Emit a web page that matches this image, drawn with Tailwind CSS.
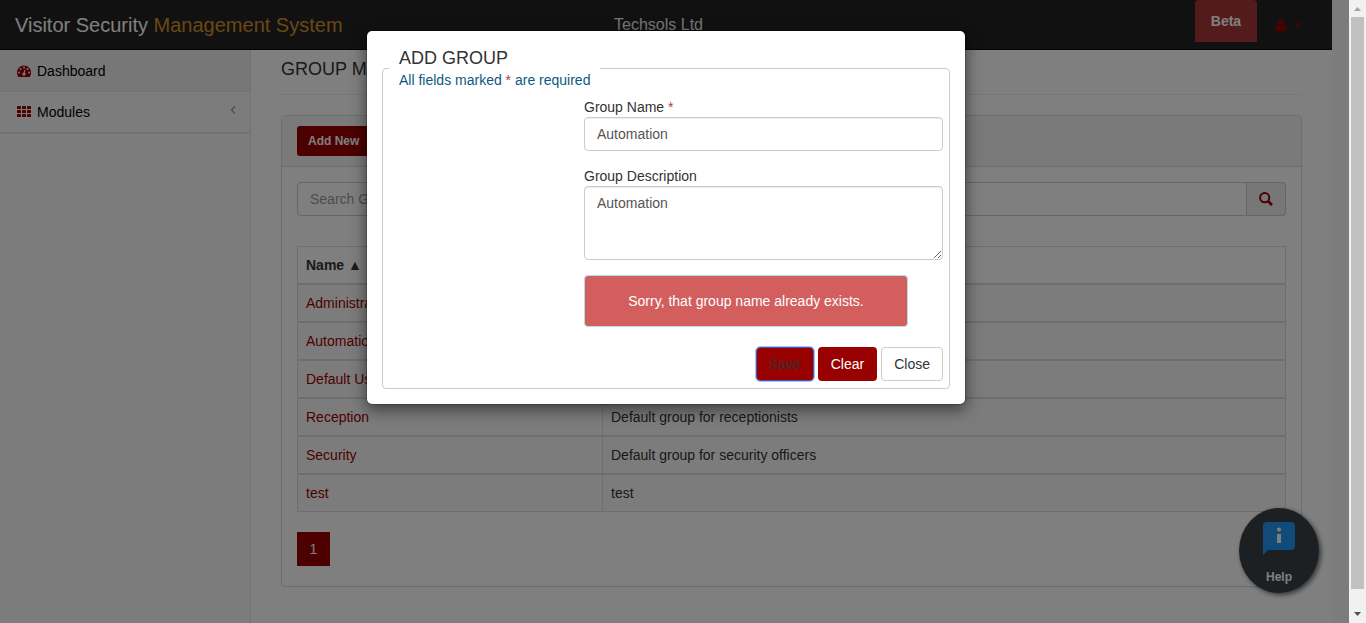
<!DOCTYPE html>
<html lang="en">
<head>
<meta charset="utf-8">
<title>Visitor Security Management System</title>
<script src="https://cdn.jsdelivr.net/npm/@tailwindcss/browser@4"></script>
</head>
<body class="flex h-screen overflow-hidden bg-[#f8f8f8] font-['Liberation_Sans',Arial,sans-serif] text-sm leading-5 text-[#333]">
<div class="relative min-w-0 flex-1 overflow-hidden pr-[17px]">
  <div class="flex h-full flex-col">
    <header class="flex h-[50px] shrink-0 items-start border-b border-[#080808] bg-[#222]">
      <a href="#" class="flex-1 pt-[15px] pl-[15px] text-xl leading-5 text-white">Visitor Security <span class="text-[#d3912c]">Management System</span></a>
      <p class="pt-[15px] text-base leading-5 text-[#eee]">Techsols Ltd</p>
      <nav class="flex flex-1 items-start justify-end pr-[30px]">
        <button type="button" class="h-[42px] w-[62px] rounded-t bg-[#a63636] font-bold text-white">Beta</button>
        <button type="button" aria-label="Account" class="ml-[18px] flex h-[50px] items-center gap-[7px] text-[#900]">
          <svg class="h-3 w-3" viewBox="0 0 12 12" fill="currentColor"><circle cx="6" cy="3" r="3"/><path d="M3 5.6Q6 8 9 5.6Q11.600 6.500 11.600 9V10.500Q11.600 12 10 12H2Q.4 12 .4 10.500V9Q.4 6.500 3 5.600Z"/></svg>
          <svg class="h-1 w-2" viewBox="0 0 8 4" fill="currentColor"><path d="M0 0H8L4 4Z"/></svg>
        </button>
      </nav>
    </header>
    <div class="flex min-h-0 flex-1">
      <aside class="w-[251px] shrink-0 border-r border-[#e7e7e7]">
        <ul>
          <li class="border-b border-[#e7e7e7] bg-[#eee]"><a href="#" class="flex h-[41px] items-center gap-[6px] pl-[17px] text-black">
            <svg class="h-[14px] w-[14px]" viewBox="0 0 14 14"><path fill="#900" d="M0 8.500A7 7 0 0 1 14 8.500Q14 10.800 12.900 12.500Q12.700 13 12.200 13H1.800Q1.300 13 1.100 12.500Q0 10.800 0 8.500Z"/><g fill="#eee"><circle cx="2" cy="8.500" r="1"/><circle cx="3.500" cy="5" r="1"/><circle cx="7" cy="3.500" r="1"/><circle cx="10.500" cy="5" r="1"/><circle cx="12" cy="8.500" r="1"/><path d="M7.500 5.500L8.500 5.800L7.800 8.600A1.600 1.600 0 1 1 6.800 8.400Z"/></g></svg>
            Dashboard</a></li>
          <li class="border-b-2 border-[#e7e7e7]"><a href="#" class="flex h-10 items-center gap-[6px] pr-[14px] pl-[17px] text-black">
            <svg class="mb-px h-[11px] w-[14px]" viewBox="0 0 14 11" fill="#900"><rect width="4" height="3" rx=".5"/><rect x="5" width="4" height="3" rx=".5"/><rect x="10" width="4" height="3" rx=".5"/><rect y="4" width="4" height="3" rx=".5"/><rect x="5" y="4" width="4" height="3" rx=".5"/><rect x="10" y="4" width="4" height="3" rx=".5"/><rect y="8" width="4" height="3" rx=".5"/><rect x="5" y="8" width="4" height="3" rx=".5"/><rect x="10" y="8" width="4" height="3" rx=".5"/></svg>
            <span class="flex-1">Modules</span>
            <svg class="mb-1 h-2 w-[6px]" viewBox="0 0 6 8" fill="none" stroke="#b89868" stroke-width="1.300"><path d="M5 .5L1.500 4L5 7.500"/></svg></a></li>
        </ul>
      </aside>
      <main class="min-w-0 flex-1 overflow-hidden bg-white px-[30px]">
        <h1 class="mb-5 border-b border-[#eee] pt-[9px] pb-[15px] text-lg leading-5">GROUP MANAGEMENT</h1>
        <section class="rounded border border-[#ddd] shadow-xs">
          <div class="border-b border-[#ddd] bg-[#f5f5f5] px-[15px] py-[10px]">
            <button type="button" class="h-[30px] rounded-[3px] bg-[#900] px-[11px] text-xs font-bold text-white">Add New</button>
          </div>
          <div class="px-[15px] pt-[15px] pb-5">
            <form class="flex h-[34px]">
              <input type="text" aria-label="Search Groups" placeholder="Search Groups" class="min-w-0 flex-1 rounded-l border border-[#ccc] px-3 placeholder:text-[#999]">
              <button type="button" aria-label="Search" class="flex w-[39px] items-center justify-center rounded-r border border-l-0 border-[#ccc] bg-[#eee]">
                <svg class="h-[14px] w-[14px]" viewBox="0 0 14 14" fill="none" stroke="#900"><circle cx="5.700" cy="5.700" r="4.600" stroke-width="2"/><path d="M9 9L13 13" stroke-width="2.600"/></svg>
              </button>
            </form>
            <table class="mt-[30px] w-full table-fixed border-collapse border border-[#ddd] text-left [&_td]:border-t-2 [&_td]:border-r [&_td]:border-[#ddd] [&_td]:p-2 [&_th]:border-r [&_th]:border-[#ddd] [&_th]:p-2">
              <thead><tr><th class="w-[305px]">Name ▲</th><th>Description</th></tr></thead>
              <tbody class="bg-[#f9f9f9]">
                <tr><td><a href="#" class="text-[#900]">Administrators</a></td><td>Default group for administrators</td></tr>
                <tr><td><a href="#" class="text-[#900]">Automation</a></td><td>Automation</td></tr>
                <tr><td><a href="#" class="text-[#900]">Default Users</a></td><td>Default group for users</td></tr>
                <tr><td><a href="#" class="text-[#900]">Reception</a></td><td>Default group for receptionists</td></tr>
                <tr><td><a href="#" class="text-[#900]">Security</a></td><td>Default group for security officers</td></tr>
                <tr><td><a href="#" class="text-[#900]">test</a></td><td>test</td></tr>
              </tbody>
            </table>
            <button type="button" class="mt-5 block h-[34px] w-[33px] bg-[#900] text-white">1</button>
          </div>
        </section>
      </main>
    </div>
  </div>

  <button type="button" class="absolute right-[30px] bottom-[30px] flex h-[85px] w-20 flex-col items-center rounded-[50%] bg-[#384147] pt-[14px] text-xs font-bold text-white shadow-[2px_2px_5px_rgba(0,0,0,0.6)]">
    <svg class="h-[33px] w-8" viewBox="0 0 32 33"><path fill="#2296f3" d="M4 0H28Q32 0 32 4V24Q32 28 28 28H5L0 33V4Q0 0 4 0Z"/><circle cx="16" cy="7.500" r="2" fill="#fff"/><path fill="#fff" d="M14 12H18V21H14Z"/></svg>
    <span class="mt-3 leading-5">Help</span>
  </button>

  <div class="absolute inset-0 flex items-start justify-center bg-black/50 pt-[30px] pr-[17px]">
    <div role="dialog" aria-label="Add group" class="w-[600px] rounded-md border border-black/20 bg-white bg-clip-padding p-[15px] shadow-[0_5px_15px_rgba(0,0,0,0.5)]">
      <fieldset class="rounded border border-[#ccc] px-[6px] pb-[7px]">
        <legend class="w-[211px] pl-[10px]">
          <span class="block text-lg leading-6">ADD GROUP</span>
          <span class="block leading-[21px] text-[#0b5a82]">All fields marked <span class="text-[#a94442]">*</span> are required</span>
        </legend>
        <div class="flex flex-col pt-[6px] pl-[195px]">
          <label for="name">Group Name <span class="text-[#a94442]">*</span></label>
          <input id="name" type="text" value="Automation" class="mb-[15px] h-[34px] rounded border border-[#ccc] px-3 text-[#555] shadow-[inset_0_1px_1px_rgba(0,0,0,0.075)]">
          <label for="description">Group Description</label>
          <textarea id="description" class="h-[74px] resize rounded border border-[#ccc] px-3 py-[6px] text-[#555] shadow-[inset_0_1px_1px_rgba(0,0,0,0.075)]">Automation</textarea>
          <p role="alert" class="mt-[15px] mr-[35px] rounded border border-[#b5dcea] bg-[#d25e5e] py-[15px] text-center text-white">Sorry, that group name already exists.</p>
        </div>
        <div class="mt-5 flex justify-end gap-1">
          <button type="button" class="h-[34px] rounded border border-[#4a58b8] bg-[#900] px-3 text-[#333] outline-1 outline-[#a4c2fb]">Save</button>
          <button type="button" class="h-[34px] rounded bg-[#900] px-[13px] text-white">Clear</button>
          <button type="button" class="h-[34px] rounded border border-[#ccc] bg-white px-3">Close</button>
        </div>
      </fieldset>
    </div>
  </div>
</div>
<div aria-hidden="true" class="flex w-[17px] shrink-0 flex-col items-center bg-[#f1f1f1]">
  <svg class="h-[17px] w-[17px] shrink-0" viewBox="0 0 17 17"><path fill="#a3a3a3" d="M5 11L8.500 7L12 11Z"/></svg>
  <div class="mb-[17px] w-[13px] flex-1 bg-[#c1c1c1]"></div>
  <svg class="h-[17px] w-[17px] shrink-0" viewBox="0 0 17 17"><path fill="#505050" d="M5 6H12L8.500 10Z"/></svg>
</div>
</body>
</html>
